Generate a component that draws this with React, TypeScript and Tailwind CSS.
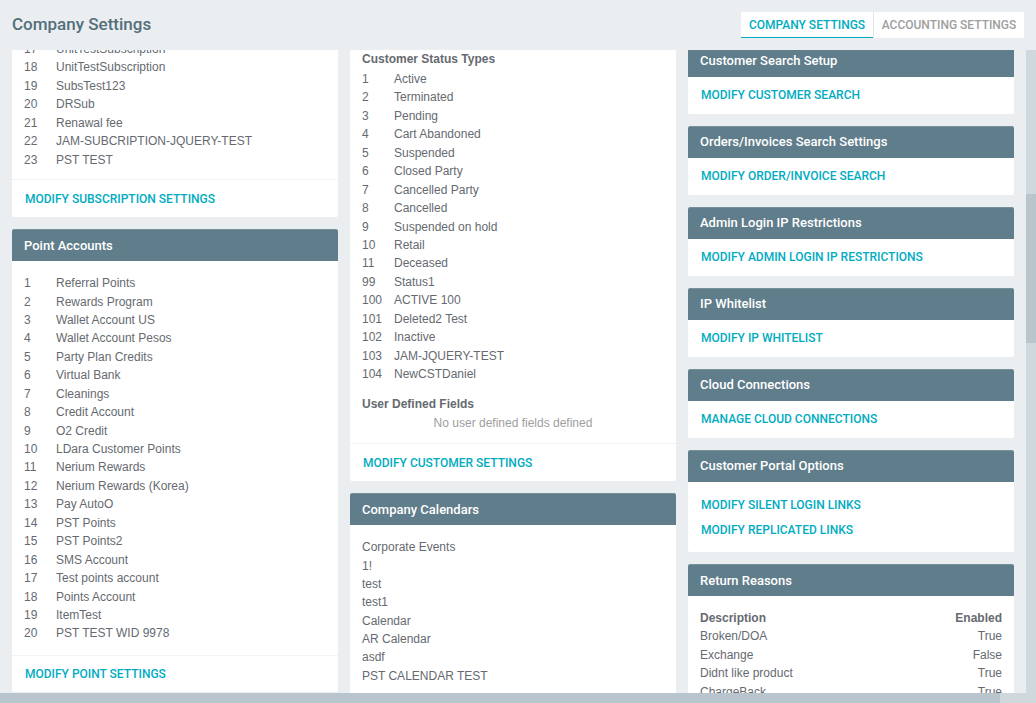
const sans = "font-['Liberation_Sans',Arial,sans-serif]";
const rob = "font-['Roboto',sans-serif]";

function Head({ t, cls = "" }: { t: string; cls?: string }) {
  return (
    <div className={`h-8 bg-[#607d8b] rounded-t-[2px] border-t border-[#78909c] px-3 flex items-center text-white text-[13px] font-medium ${rob} ${cls}`}>
      {t}
    </div>
  );
}

function Link({ t }: { t: string }) {
  return <div className={`text-[#00acc1] text-[12px] leading-[18px] font-medium ${rob}`}>{t}</div>;
}

function Rows({ items }: { items: [string, string][] }) {
  return (
    <div className="flex flex-col">
      {items.map(([n, t], i) => (
        <div key={i} className="flex h-[18.45px] leading-[18.45px]">
          <div className="w-8">{n}</div>
          <div>{t}</div>
        </div>
      ))}
    </div>
  );
}

function LinkCard({ title, link }: { title: string; link: string }) {
  return (
    <div className="bg-white rounded-[2px] shrink-0">
      <Head t={title} cls="pb-[2px]" />
      <div className="px-[13px] h-[37px] flex items-center pb-[1px]">
        <Link t={link} />
      </div>
    </div>
  );
}

const points: [string, string][] = [
  ["1", "Referral Points"], ["2", "Rewards Program"], ["3", "Wallet Account US"], ["4", "Wallet Account Pesos"],
  ["5", "Party Plan Credits"], ["6", "Virtual Bank"], ["7", "Cleanings"], ["8", "Credit Account"], ["9", "O2 Credit"],
  ["10", "LDara Customer Points"], ["11", "Nerium Rewards"], ["12", "Nerium Rewards (Korea)"], ["13", "Pay AutoO"],
  ["14", "PST Points"], ["15", "PST Points2"], ["16", "SMS Account"], ["17", "Test points account"], ["18", "Points Account"],
  ["19", "ItemTest"], ["20", "PST TEST WID 9978"],
];
const subs: [string, string][] = [
  ["17", "UnitTestSubscription"], ["18", "UnitTestSubscription"], ["19", "SubsTest123"], ["20", "DRSub"],
  ["21", "Renawal fee"], ["22", "JAM-SUBCRIPTION-JQUERY-TEST"], ["23", "PST TEST"],
];
const status: [string, string][] = [
  ["1", "Active"], ["2", "Terminated"], ["3", "Pending"], ["4", "Cart Abandoned"], ["5", "Suspended"], ["6", "Closed Party"],
  ["7", "Cancelled Party"], ["8", "Cancelled"], ["9", "Suspended on hold"], ["10", "Retail"], ["11", "Deceased"], ["99", "Status1"],
  ["100", "ACTIVE 100"], ["101", "Deleted2 Test"], ["102", "Inactive"], ["103", "JAM-JQUERY-TEST"], ["104", "NewCSTDaniel"],
];
const cals = ["Corporate Events", "1!", "test", "test1", "Calendar", "AR Calendar", "asdf", "PST CALENDAR TEST"];
const reasons = [["Broken/DOA", "True"], ["Exchange", "False"], ["Didnt like product", "True"], ["ChargeBack", "True"]];

export default function App() {
  return (
    <div className={`w-[1036px] h-[703px] overflow-hidden bg-[#ebeef1] flex flex-col text-[12px] text-[#666a70] ${sans}`}>
      <header className="h-[50px] shrink-0 flex items-center justify-between px-3">
        <h1 className={`text-[17px] font-medium text-[#546e7a] ${rob}`}>Company Settings</h1>
        <div className={`flex items-stretch bg-white rounded-[2px] h-[26px] text-[12px] font-medium ${rob}`}>
          <div className="w-[132px] flex items-center justify-center text-[#00acc1] border-b border-[#00acc1]">COMPANY SETTINGS</div>
          <div className="w-px bg-[#e4e7ea]" />
          <div className="w-[150px] flex items-center justify-center text-[#9e9e9e]">ACCOUNTING SETTINGS</div>
        </div>
      </header>

      <div className="flex-1 min-h-0 flex">
        <div className="flex-1 min-w-0 overflow-hidden pl-3 flex gap-3">
          <div className="w-[326px] shrink-0 flex flex-col gap-3 -mt-[10px]">
            <div className="bg-white rounded-[2px] shrink-0">
              <div className="px-3 pb-[10px]"><Rows items={subs} /></div>
              <div className="border-t border-[#f1f3f5] px-[13px] h-[38px] flex items-center"><Link t="MODIFY SUBSCRIPTION SETTINGS" /></div>
            </div>
            <div className="bg-white rounded-[2px] shrink-0">
              <Head t="Point Accounts" />
              <div className="px-3 pt-[13px] pb-[12px]"><Rows items={points} /></div>
              <div className="border-t border-[#f1f3f5] px-[13px] h-[37px] flex items-center"><Link t="MODIFY POINT SETTINGS" /></div>
            </div>
          </div>

          <div className="w-[326px] shrink-0 flex flex-col gap-3">
            <div className="bg-white rounded-[2px] shrink-0">
              <div className="px-3">
                <div className="font-bold h-[19px] leading-[19px]">Customer Status Types</div>
                <div className="mt-[1px]"><Rows items={status} /></div>
                <div className="font-bold mt-[12px] h-[19px] leading-[19px]">User Defined Fields</div>
                <div className="text-center text-[#9e9e9e] h-[19px] leading-[19px]">No user defined fields defined</div>
              </div>
              <div className="border-t border-[#f1f3f5] mt-[10px] px-[13px] h-[38px] flex items-center"><Link t="MODIFY CUSTOMER SETTINGS" /></div>
            </div>
            <div className="bg-white rounded-[2px] shrink-0">
              <Head t="Company Calendars" />
              <div className="px-3 pt-[13px] pb-6">
                {cals.map((c, i) => (
                  <div key={i} className="h-[18.3px] leading-[18.3px]">{c}</div>
                ))}
              </div>
            </div>
          </div>

          <div className="w-[326px] shrink-0 flex flex-col gap-3 -mt-[5px]">
            <LinkCard title="Customer Search Setup" link="MODIFY CUSTOMER SEARCH" />
            <LinkCard title="Orders/Invoices Search Settings" link="MODIFY ORDER/INVOICE SEARCH" />
            <LinkCard title="Admin Login IP Restrictions" link="MODIFY ADMIN LOGIN IP RESTRICTIONS" />
            <LinkCard title="IP Whitelist" link="MODIFY IP WHITELIST" />
            <LinkCard title="Cloud Connections" link="MANAGE CLOUD CONNECTIONS" />
            <div className="bg-white rounded-[2px] shrink-0">
              <Head t="Customer Portal Options" cls="pb-[2px]" />
              <div className="px-[13px] h-[70px] pt-[14px] flex flex-col gap-[7px]">
                <Link t="MODIFY SILENT LOGIN LINKS" />
                <Link t="MODIFY REPLICATED LINKS" />
              </div>
            </div>
            <div className="bg-white rounded-[2px] shrink-0">
              <Head t="Return Reasons" />
              <div className="px-3 pt-[13px]">
                <div className="flex justify-between font-bold h-[18.45px] leading-[18.45px]"><span>Description</span><span>Enabled</span></div>
                {reasons.map(([a, b], i) => (
                  <div key={i} className="flex justify-between h-[18.45px] leading-[18.45px]"><span>{a}</span><span>{b}</span></div>
                ))}
              </div>
            </div>
          </div>
        </div>
        <div className="w-[10px] shrink-0 bg-[#cfd8dc] flex flex-col">
          <div className="h-[144px] shrink-0" />
          <div className="h-[149px] shrink-0 bg-[#b8c5cc]" />
        </div>
      </div>
      <div className="h-[10px] shrink-0 bg-[#cfd8dc] flex">
        <div className="w-[1000px] bg-[#b8c5cc]" />
      </div>
    </div>
  );
}
